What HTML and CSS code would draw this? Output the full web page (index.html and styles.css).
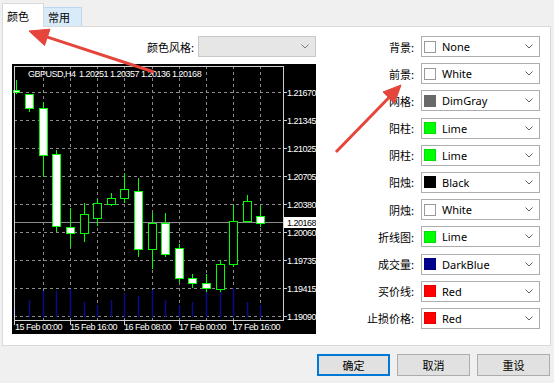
FILE: index.html
```html
<!DOCTYPE html>
<html>
<head>
<meta charset="utf-8">
<link rel="stylesheet" href="styles.css">
</head>
<body>
<div class="dialog">
  <div class="tabs">
    <div class="tab tab-active">颜色</div>
    <div class="tab tab-idle">常用</div>
  </div>
  <div class="panel">
    <div class="left">
      <div class="scheme">
        <span class="lbl">颜色风格:</span>
        <div class="select select-disabled">
          <svg class="chev" width="8" height="5" viewBox="0 0 8 5"><polyline points="0.5,0.5 4,4 7.5,0.5" fill="none" stroke="#7a7a7a"/></svg>
        </div>
      </div>
      <div class="chart">
        <svg width="304" height="270" viewBox="0 0 304 270" class="chart-svg">
          <rect x="0" y="0" width="304" height="270" fill="#000"/>
          <g stroke="#8a8a8a" stroke-dasharray="3 3" stroke-width="1">
            <line x1="31.5" y1="2" x2="31.5" y2="256"/>
            <line x1="58.5" y1="2" x2="58.5" y2="256"/>
            <line x1="85.5" y1="2" x2="85.5" y2="256"/>
            <line x1="112.5" y1="2" x2="112.5" y2="256"/>
            <line x1="140.5" y1="2" x2="140.5" y2="256"/>
            <line x1="167.5" y1="2" x2="167.5" y2="256"/>
            <line x1="194.5" y1="2" x2="194.5" y2="256"/>
            <line x1="221.5" y1="2" x2="221.5" y2="256"/>
            <line x1="248.5" y1="2" x2="248.5" y2="256"/>
            <line x1="2" y1="28.5" x2="271" y2="28.5"/>
            <line x1="2" y1="56.5" x2="271" y2="56.5"/>
            <line x1="2" y1="84.5" x2="271" y2="84.5"/>
            <line x1="2" y1="112.5" x2="271" y2="112.5"/>
            <line x1="2" y1="140.5" x2="271" y2="140.5"/>
            <line x1="2" y1="168.5" x2="271" y2="168.5"/>
            <line x1="2" y1="196.5" x2="271" y2="196.5"/>
            <line x1="2" y1="224.5" x2="271" y2="224.5"/>
            <line x1="2" y1="252.5" x2="271" y2="252.5"/>
          </g>
          <g stroke="#0a0a8c" stroke-width="1.5">
            <line x1="2.5" y1="243" x2="2.5" y2="253"/>
            <line x1="17.5" y1="236" x2="17.5" y2="253"/>
            <line x1="31.5" y1="227" x2="31.5" y2="253"/>
            <line x1="44.5" y1="227" x2="44.5" y2="253"/>
            <line x1="58.5" y1="225" x2="58.5" y2="253"/>
            <line x1="72.5" y1="238" x2="72.5" y2="253"/>
            <line x1="85.5" y1="241" x2="85.5" y2="253"/>
            <line x1="99.5" y1="236" x2="99.5" y2="253"/>
            <line x1="112.5" y1="229" x2="112.5" y2="253"/>
            <line x1="126.5" y1="232" x2="126.5" y2="253"/>
            <line x1="140.5" y1="226" x2="140.5" y2="253"/>
            <line x1="153.5" y1="236" x2="153.5" y2="253"/>
            <line x1="167.5" y1="241" x2="167.5" y2="253"/>
            <line x1="180.5" y1="238" x2="180.5" y2="253"/>
            <line x1="194.5" y1="226" x2="194.5" y2="253"/>
            <line x1="208.5" y1="228" x2="208.5" y2="253"/>
            <line x1="221.5" y1="224" x2="221.5" y2="253"/>
            <line x1="235.5" y1="238" x2="235.5" y2="253"/>
            <line x1="248.5" y1="241" x2="248.5" y2="253"/>
          </g>
          <line x1="2" y1="158.5" x2="271" y2="158.5" stroke="#8c8c8c"/>
          <g stroke="#00ff00" stroke-width="1">
            <line x1="4.5" y1="16" x2="4.5" y2="30"/>
            <line x1="17.5" y1="30" x2="17.5" y2="48"/>
            <line x1="31.5" y1="38" x2="31.5" y2="113"/>
            <line x1="44.5" y1="86" x2="44.5" y2="168"/>
            <line x1="58.5" y1="144" x2="58.5" y2="183"/>
            <line x1="72.5" y1="139" x2="72.5" y2="178"/>
            <line x1="85.5" y1="135" x2="85.5" y2="162"/>
            <line x1="99.5" y1="129" x2="99.5" y2="142"/>
            <line x1="112.5" y1="109" x2="112.5" y2="139"/>
            <line x1="126.5" y1="114" x2="126.5" y2="193"/>
            <line x1="140.5" y1="149" x2="140.5" y2="205"/>
            <line x1="153.5" y1="149" x2="153.5" y2="193"/>
            <line x1="167.5" y1="180" x2="167.5" y2="218"/>
            <line x1="180.5" y1="210" x2="180.5" y2="224"/>
            <line x1="194.5" y1="210" x2="194.5" y2="228"/>
            <line x1="208.5" y1="196" x2="208.5" y2="228"/>
            <line x1="221.5" y1="141" x2="221.5" y2="203"/>
            <line x1="235.5" y1="131" x2="235.5" y2="159"/>
            <line x1="248.5" y1="142" x2="248.5" y2="163"/>
          </g>
          <g stroke="#00ff00" stroke-width="1" fill="#fff">
            <rect x="1.5" y="26.5" width="6" height="2"/>
            <rect x="13.5" y="30.5" width="8" height="14"/>
            <rect x="27.5" y="44.5" width="8" height="47"/>
            <rect x="40.5" y="90.5" width="8" height="72"/>
            <rect x="54.5" y="163.5" width="8" height="6"/>
            <rect x="122.5" y="127.5" width="8" height="58"/>
            <rect x="149.5" y="159.5" width="8" height="31"/>
            <rect x="163.5" y="184.5" width="8" height="30"/>
            <rect x="176.5" y="214.5" width="8" height="5"/>
            <rect x="190.5" y="219.5" width="8" height="5"/>
            <rect x="244.5" y="152.5" width="8" height="7"/>
          </g>
          <g stroke="#00ff00" stroke-width="1" fill="#000">
            <rect x="68.5" y="150.5" width="8" height="19"/>
            <rect x="81.5" y="139.5" width="8" height="15"/>
            <rect x="95.5" y="134.5" width="8" height="6"/>
            <rect x="108.5" y="125.5" width="8" height="9"/>
            <rect x="136.5" y="159.5" width="8" height="26"/>
            <rect x="204.5" y="200.5" width="8" height="25"/>
            <rect x="217.5" y="157.5" width="8" height="43"/>
            <rect x="231.5" y="137.5" width="8" height="20"/>
          </g>
          <rect x="2.5" y="2.5" width="269" height="254" fill="none" stroke="#d0d0d0"/>
          <g stroke="#d0d0d0">
            <line x1="272" y1="28.5" x2="275" y2="28.5"/>
            <line x1="272" y1="56.5" x2="275" y2="56.5"/>
            <line x1="272" y1="84.5" x2="275" y2="84.5"/>
            <line x1="272" y1="112.5" x2="275" y2="112.5"/>
            <line x1="272" y1="140.5" x2="275" y2="140.5"/>
            <line x1="272" y1="168.5" x2="275" y2="168.5"/>
            <line x1="272" y1="196.5" x2="275" y2="196.5"/>
            <line x1="272" y1="224.5" x2="275" y2="224.5"/>
            <line x1="272" y1="252.5" x2="275" y2="252.5"/>
            <line x1="2.5" y1="257" x2="2.5" y2="261"/>
            <line x1="58.5" y1="257" x2="58.5" y2="261"/>
            <line x1="112.5" y1="257" x2="112.5" y2="261"/>
            <line x1="167.5" y1="257" x2="167.5" y2="261"/>
            <line x1="221.5" y1="257" x2="221.5" y2="261"/>
          </g>
          <rect x="272" y="153" width="32" height="11" fill="#fff"/>
          <g class="ct" fill="#fff">
            <text x="16" y="13">GBPUSD,H4</text>
            <text x="67" y="13">1.20251 1.20357 1.20136 1.20168</text>
            <text x="275" y="31.5">1.21670</text>
            <text x="275" y="59.5">1.21345</text>
            <text x="275" y="87.5">1.21025</text>
            <text x="275" y="115.5">1.20705</text>
            <text x="275" y="143.5">1.20380</text>
            <text x="275" y="171.5">1.20060</text>
            <text x="275" y="199.5">1.19735</text>
            <text x="275" y="227.5">1.19415</text>
            <text x="275" y="255.5">1.19090</text>
            <text x="3" y="266">15 Feb 00:00</text>
            <text x="58" y="266">15 Feb 16:00</text>
            <text x="112" y="266">16 Feb 08:00</text>
            <text x="167" y="266">17 Feb 00:00</text>
            <text x="221" y="266">17 Feb 16:00</text>
          </g>
          <text class="ct" x="275" y="161.5" fill="#000">1.20168</text>
        </svg>
      </div>
    </div>
    <div class="colors">
      <div class="row"><span class="lbl">背景:</span><div class="select"><span class="swatch sw-white"></span><span class="val">None</span><svg class="chev" width="8" height="5" viewBox="0 0 8 5"><polyline points="0.5,0.5 4,4 7.5,0.5" fill="none" stroke="#606060"/></svg></div></div>
      <div class="row"><span class="lbl">前景:</span><div class="select"><span class="swatch sw-white"></span><span class="val">White</span><svg class="chev" width="8" height="5" viewBox="0 0 8 5"><polyline points="0.5,0.5 4,4 7.5,0.5" fill="none" stroke="#606060"/></svg></div></div>
      <div class="row"><span class="lbl">网格:</span><div class="select"><span class="swatch sw-dimgray"></span><span class="val">DimGray</span><svg class="chev" width="8" height="5" viewBox="0 0 8 5"><polyline points="0.5,0.5 4,4 7.5,0.5" fill="none" stroke="#606060"/></svg></div></div>
      <div class="row"><span class="lbl">阳柱:</span><div class="select"><span class="swatch sw-lime"></span><span class="val">Lime</span><svg class="chev" width="8" height="5" viewBox="0 0 8 5"><polyline points="0.5,0.5 4,4 7.5,0.5" fill="none" stroke="#606060"/></svg></div></div>
      <div class="row"><span class="lbl">阴柱:</span><div class="select"><span class="swatch sw-lime"></span><span class="val">Lime</span><svg class="chev" width="8" height="5" viewBox="0 0 8 5"><polyline points="0.5,0.5 4,4 7.5,0.5" fill="none" stroke="#606060"/></svg></div></div>
      <div class="row"><span class="lbl">阳烛:</span><div class="select"><span class="swatch sw-black"></span><span class="val">Black</span><svg class="chev" width="8" height="5" viewBox="0 0 8 5"><polyline points="0.5,0.5 4,4 7.5,0.5" fill="none" stroke="#606060"/></svg></div></div>
      <div class="row"><span class="lbl">阴烛:</span><div class="select"><span class="swatch sw-white"></span><span class="val">White</span><svg class="chev" width="8" height="5" viewBox="0 0 8 5"><polyline points="0.5,0.5 4,4 7.5,0.5" fill="none" stroke="#606060"/></svg></div></div>
      <div class="row"><span class="lbl">折线图:</span><div class="select"><span class="swatch sw-lime"></span><span class="val">Lime</span><svg class="chev" width="8" height="5" viewBox="0 0 8 5"><polyline points="0.5,0.5 4,4 7.5,0.5" fill="none" stroke="#606060"/></svg></div></div>
      <div class="row"><span class="lbl">成交量:</span><div class="select"><span class="swatch sw-darkblue"></span><span class="val">DarkBlue</span><svg class="chev" width="8" height="5" viewBox="0 0 8 5"><polyline points="0.5,0.5 4,4 7.5,0.5" fill="none" stroke="#606060"/></svg></div></div>
      <div class="row"><span class="lbl">买价线:</span><div class="select"><span class="swatch sw-red"></span><span class="val">Red</span><svg class="chev" width="8" height="5" viewBox="0 0 8 5"><polyline points="0.5,0.5 4,4 7.5,0.5" fill="none" stroke="#606060"/></svg></div></div>
      <div class="row"><span class="lbl">止损价格:</span><div class="select"><span class="swatch sw-red"></span><span class="val">Red</span><svg class="chev" width="8" height="5" viewBox="0 0 8 5"><polyline points="0.5,0.5 4,4 7.5,0.5" fill="none" stroke="#606060"/></svg></div></div>
    </div>
  </div>
  <div class="buttons">
    <div class="btn btn-default">确定</div>
    <div class="btn">取消</div>
    <div class="btn">重设</div>
  </div>
</div>
<svg class="arrows" width="554" height="383" viewBox="0 0 554 383">
  <g fill="#e5453b" stroke="#e5453b">
    <line x1="154" y1="72" x2="46" y2="36.6" stroke-width="3"/>
    <polygon points="29,31 50,29.2 44.5,45.5" stroke-width="1"/>
    <line x1="336" y1="152" x2="389.5" y2="97" stroke-width="3"/>
    <polygon points="401,85 394.5,103 383,92" stroke-width="1"/>
  </g>
</svg>
</body>
</html>
```

FILE: styles.css
```css
html, body {
  margin: 0;
  padding: 0;
}
body {
  width: 554px;
  height: 383px;
  overflow: hidden;
  position: relative;
  background: #f0f0f0;
  font-family: "Noto Sans", "Noto Sans CJK SC", sans-serif;
  font-size: 11px;
  color: #000;
}
.dialog {
  display: flex;
  flex-direction: column;
}
.tabs {
  display: flex;
  align-items: flex-end;
  height: 26px;
  padding-left: 2px;
}
.tab {
  box-sizing: border-box;
  display: flex;
  align-items: center;
  font-family: "Noto Sans CJK SC", sans-serif;
  font-size: 11px;
}
.tab-active {
  width: 42px;
  height: 24px;
  padding-left: 4px;
  background: #fff;
  border: 1px solid #d9d9d9;
  border-bottom: none;
  position: relative;
  z-index: 1;
  margin-bottom: -1px;
}
.tab-idle {
  width: 38px;
  height: 19px;
  padding-left: 4px;
  background: #d9eaf9;
  border: 1px solid #bcd7f0;
  border-bottom: none;
  border-left: none;
}
.panel {
  box-sizing: border-box;
  height: 320px;
  margin: 0 3px 0 2px;
  background: #fff;
  border: 1px solid #d9d9d9;
  display: flex;
}
.left {
  padding: 9px 0 0 9px;
  width: 304px;
  display: flex;
  flex-direction: column;
  gap: 7px;
}
.scheme {
  display: flex;
  justify-content: flex-end;
  align-items: center;
  gap: 4px;
  height: 21px;
}
.lbl {
  font-family: "Noto Sans CJK SC", sans-serif;
  font-size: 11px;
  white-space: nowrap;
}
.select {
  box-sizing: border-box;
  width: 119px;
  height: 21px;
  border: 1px solid #adadad;
  background: #fff;
  display: flex;
  align-items: center;
  padding: 0 6px 0 2px;
}
.select-disabled {
  width: 118px;
  background: #e6e6e6;
  border-color: #c8c8c8;
}
.chev {
  margin-left: auto;
  display: block;
}
.chart {
  width: 304px;
  height: 270px;
}
.chart-svg {
  display: block;
}
.ct {
  font-family: "Liberation Sans", sans-serif;
  font-size: 9px;
  letter-spacing: -0.5px;
}
.colors {
  margin-left: auto;
  padding: 9px 10px 0 0;
  display: flex;
  flex-direction: column;
  gap: 6.2px;
}
.row {
  display: flex;
  justify-content: flex-end;
  align-items: center;
  gap: 7px;
  height: 21px;
}
.swatch {
  box-sizing: border-box;
  width: 12px;
  height: 12px;
  border: 1px solid #9a9a9a;
  background: #fff;
  flex: none;
}
.sw-dimgray { background: #696969; border-color: #696969; }
.sw-lime { background: #00ff00; border-color: #00e000; }
.sw-black { background: #000; border-color: #000; }
.sw-darkblue { background: #00008b; border-color: #00008b; }
.sw-red { background: #ff0000; border-color: #e00000; }
.val {
  margin-left: 6px;
  font-size: 11px;
  line-height: 1;
}
.buttons {
  display: flex;
  justify-content: flex-end;
  gap: 7px;
  padding: 8px 4px 0 0;
}
.btn {
  box-sizing: border-box;
  width: 73px;
  height: 22px;
  background: #e1e1e1;
  border: 1px solid #adadad;
  display: flex;
  align-items: center;
  justify-content: center;
  font-family: "Noto Sans CJK SC", sans-serif;
  font-size: 11px;
}
.btn-default {
  border-color: #0078d7;
  box-shadow: inset 0 0 0 1px #0078d7;
}
.arrows {
  position: absolute;
  left: 0;
  top: 0;
  pointer-events: none;
}
```
